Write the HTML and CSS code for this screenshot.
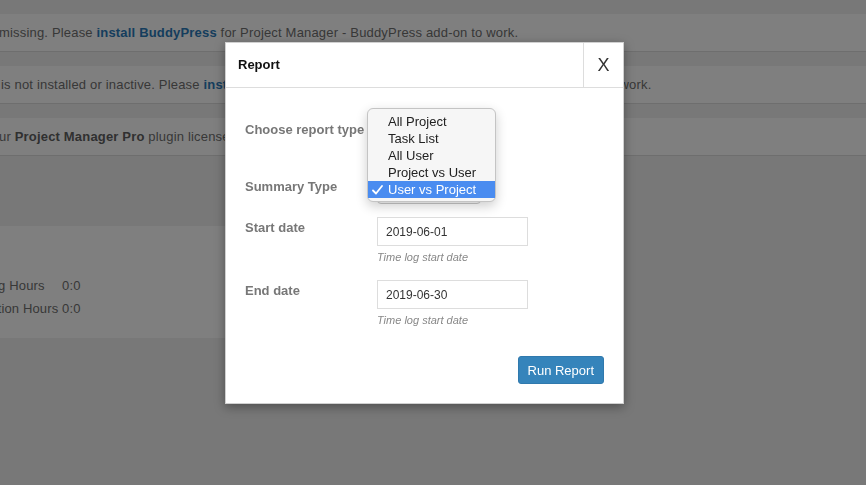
FILE: index.html
```html
<!DOCTYPE html>
<html lang="en">
<head>
    <meta charset="UTF-8">
    <meta name="viewport" content="width=device-width, initial-scale=1.0">
    <title>Report</title>
    <link rel="stylesheet" href="styles.css">
</head>
<body>
    <div class="wrap">
        <div class="notice">
            <p class="notice-text shift-a">missing. Please <a href="#">install BuddyPress</a> for Project Manager - BuddyPress add-on to work.</p>
        </div>
        <div class="notice">
            <p class="notice-text shift-b">is not installed or inactive. Please <a href="#">install Project Manager</a> for Project Manager - BuddyPress add-on to work.</p>
        </div>
        <div class="notice">
            <p class="notice-text shift-c">ur <strong>Project Manager Pro</strong> plugin license to get updates and support.</p>
        </div>

        <div class="summary-box">
            <table class="summary-table">
                <tr>
                    <td class="summary-label">Working Hours</td>
                    <td>0:0</td>
                </tr>
                <tr>
                    <td class="summary-label">Estimation Hours</td>
                    <td>0:0</td>
                </tr>
            </table>
        </div>
    </div>

    <div class="overlay"></div>

    <div class="modal">
        <div class="modal-header">
            <div class="modal-title">Report</div>
            <div class="modal-close">X</div>
        </div>
        <div class="modal-body">
            <div class="form-row">
                <label class="form-label">Choose report type</label>
                <div class="fake-select"></div>
            </div>
            <div class="form-row row-summary">
                <label class="form-label">Summary Type</label>
                <div class="fake-select"></div>
            </div>
            <div class="form-row row-date">
                <label class="form-label">Start date</label>
                <div class="field">
                    <input type="text" class="date-input" value="2019-06-01">
                    <p class="hint">Time log start date</p>
                </div>
            </div>
            <div class="form-row row-date row-end">
                <label class="form-label">End date</label>
                <div class="field">
                    <input type="text" class="date-input" value="2019-06-30">
                    <p class="hint">Time log start date</p>
                </div>
            </div>
            <div class="modal-footer">
                <button class="btn-primary">Run Report</button>
            </div>
        </div>

        <ul class="select-menu">
            <li>All Project</li>
            <li>Task List</li>
            <li>All User</li>
            <li>Project vs User</li>
            <li class="selected">
                <svg class="check" width="11" height="10" viewBox="0 0 11 10">
                    <polyline points="1,5.5 4,8.5 10,1" fill="none" stroke="#fff" stroke-width="1.8" stroke-linecap="round" stroke-linejoin="round"/>
                </svg>
                User vs Project
            </li>
        </ul>
    </div>
</body>
</html>
```

FILE: styles.css
```css
body {
    margin: 0;
    background: #f1f1f1;
    font-family: "Liberation Sans", Arial, sans-serif;
    font-size: 13px;
    color: #666;
    overflow: hidden;
}
.wrap {
    padding-top: 14px;
}
.notice {
    background: #fff;
    height: 37px;
    border-bottom: 1px solid #dcdcdc;
    margin-bottom: 14px;
    white-space: nowrap;
    overflow: hidden;
}
.notice-text {
    margin: 0;
    line-height: 37px;
    letter-spacing: 0.18px;
    color: #707070;
}
.notice-text a {
    color: #2b7bba;
    font-weight: bold;
    text-decoration: none;
}
.notice-text strong {
    color: #606060;
}
.shift-a {
    margin-left: -1px;
}
.shift-b {
    margin-left: 1px;
}
.shift-c {
    margin-left: -1px;
}
.summary-box {
    background: #fff;
    margin-top: 70px;
    height: 112px;
    width: 540px;
    box-sizing: border-box;
    padding-top: 48px;
}
.summary-table {
    margin-left: -43px;
    border-collapse: collapse;
    color: #707070;
    letter-spacing: 0.15px;
}
.summary-table td {
    padding: 0;
    line-height: 23px;
}
.summary-label {
    width: 105px;
}

.overlay {
    position: fixed;
    top: 0;
    left: 0;
    right: 0;
    bottom: 0;
    background: rgba(0, 0, 0, 0.5);
}

.modal {
    position: absolute;
    left: 225px;
    top: 42px;
    width: 397px;
    background: #fff;
    border: 1px solid #d0d0d0;
    box-shadow: 0 3px 10px rgba(0, 0, 0, 0.35);
}
.modal-header {
    display: flex;
    height: 44px;
    border-bottom: 1px solid #ddd;
}
.modal-title {
    flex: 1;
    padding-left: 12px;
    line-height: 44px;
    font-weight: bold;
    color: #111;
}
.modal-close {
    width: 39px;
    border-left: 1px solid #ddd;
    text-align: center;
    line-height: 44px;
    font-size: 18px;
    color: #333;
}
.modal-body {
    padding: 27px 19px 19px 19px;
}
.form-row {
    display: grid;
    grid-template-columns: 132px 1fr;
    align-items: start;
}
.form-label {
    font-weight: bold;
    color: #777;
    line-height: 29px;
}
.row-summary {
    margin-top: 31px;
}
.row-summary .form-label {
    line-height: 23px;
}
.row-date {
    margin-top: 13px;
}
.row-date .form-label {
    line-height: 21px;
}
.row-end {
    margin-top: 16px;
}
.fake-select {
    width: 102px;
    height: 27px;
    border: 1px solid #c8c8c8;
    border-radius: 4px;
    background: #fafafa;
}
.date-input {
    display: block;
    box-sizing: border-box;
    width: 151px;
    height: 29px;
    margin: 0;
    padding: 0 8px;
    border: 1px solid #ddd;
    font-family: inherit;
    font-size: 12px;
    color: #333;
    outline: none;
}
.hint {
    margin: 4px 0 0 0;
    line-height: 14px;
    font-size: 11px;
    font-style: italic;
    color: #888;
}
.modal-footer {
    margin-top: 29px;
    display: flex;
    justify-content: flex-end;
}
.btn-primary {
    height: 28px;
    padding: 0 9px;
    background: #3584bb;
    border: 1px solid #3079ad;
    border-radius: 3px;
    color: #fff;
    font-family: inherit;
    font-size: 13px;
}

.select-menu {
    position: absolute;
    left: 141px;
    top: 65px;
    width: 127px;
    margin: 0;
    padding: 4px 0 3px 0;
    list-style: none;
    background: #f6f6f6;
    border: 1px solid #c4c4c4;
    border-radius: 6px;
    box-shadow: 0 4px 12px rgba(0, 0, 0, 0.2);
    color: #222;
}
.select-menu li {
    position: relative;
    height: 17px;
    line-height: 17px;
    padding-left: 20px;
}
.select-menu .selected {
    background: #4a8cf0;
    color: #fff;
}
.check {
    position: absolute;
    left: 4px;
    top: 4px;
}
```
